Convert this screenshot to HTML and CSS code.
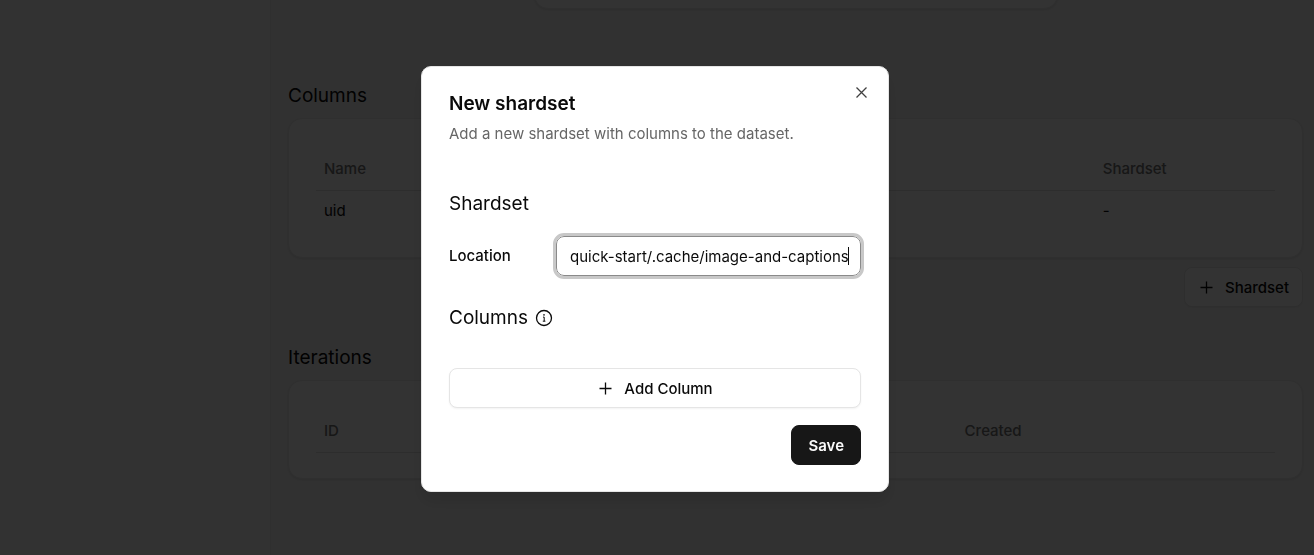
FILE: index.html
```html
<!DOCTYPE html>
<html lang="en">
<head>
<meta charset="utf-8">
<title>New shardset</title>
<link rel="stylesheet" href="styles.css">
</head>
<body>
<div class="app">
  <aside class="sidebar"></aside>
  <main class="main">
    <div class="summary card"></div>
    <section class="section">
      <h2 class="heading">Columns</h2>
      <div class="card">
        <table class="table">
          <colgroup><col class="col-wide"><col></colgroup>
          <thead><tr><th>Name</th><th>Shardset</th></tr></thead>
          <tbody><tr><td>uid</td><td>-</td></tr></tbody>
        </table>
      </div>
      <button class="button button-outline button-end" type="button">
        <svg class="icon" viewBox="0 0 17 17" aria-hidden="true"><path d="M8.5 2.5v12M2.5 8.5h12"/></svg>
        Shardset
      </button>
    </section>
    <section class="section">
      <h2 class="heading">Iterations</h2>
      <div class="card">
        <table class="table">
          <colgroup><col class="col-mid"><col></colgroup>
          <thead><tr><th>ID</th><th>Created</th></tr></thead>
        </table>
      </div>
    </section>
  </main>
</div>
<div class="overlay">
  <div class="dialog" role="dialog" aria-modal="true" aria-labelledby="dialog-title">
    <button class="close" type="button" aria-label="Close">
      <svg class="icon" viewBox="0 0 17 17" aria-hidden="true"><path d="M3.5 3.5l10 10M13.5 3.5l-10 10"/></svg>
    </button>
    <header class="dialog-header">
      <h1 class="title" id="dialog-title">New shardset</h1>
      <p class="description">Add a new shardset with columns to the dataset.</p>
    </header>
    <form class="form">
      <h2 class="heading">Shardset</h2>
      <div class="field">
        <label class="label" for="location">Location</label>
        <div class="input-wrap">
          <input class="input" id="location" type="text" value="quick-start/.cache/image-and-captions">
          <span class="caret"></span>
        </div>
      </div>
      <h2 class="heading heading-icon">Columns
        <svg class="icon icon-info" viewBox="0 0 18 18" aria-hidden="true"><circle cx="9" cy="9" r="7.5"/><path class="stem" d="M8 8.1h1.2v4M7.8 12.2h2.6"/><circle class="dot" cx="9" cy="5.9" r="0.8"/></svg>
      </h2>
      <button class="button button-outline button-add" type="button">
        <svg class="icon" viewBox="0 0 17 17" aria-hidden="true"><path d="M8.5 2.5v12M2.5 8.5h12"/></svg>
        Add Column
      </button>
      <button class="button button-primary" type="button">Save</button>
    </form>
  </div>
</div>
</body>
</html>
```
FILE: styles.css
```css
* { box-sizing: border-box; }

body {
  margin: 0;
  font-family: Inter, "Liberation Sans", sans-serif;
  font-size: 15px;
  line-height: 24px;
  color: #0a0a0a;
}

h1, h2, p { margin: 0; }

.app {
  display: flex;
  min-height: 100vh;
  background: #f5f5f5;
}

.sidebar {
  flex: 0 0 271px;
  border-right: 1px solid #e8e8e8;
  background: #f8f8f8;
}

.main {
  flex: 1;
  display: flex;
  flex-direction: column;
  padding: 0 11px 0 17px;
  overflow: hidden;
}

.card {
  padding: 30px 27px 25px;
  border: 1px solid #ebebeb;
  border-radius: 14px;
  background: #fcfcfc;
  box-shadow: 0 1px 3px rgba(0, 0, 0, 0.1);
}

.summary {
  align-self: center;
  width: 524px;
  margin: -48px 0 73px;
}

.section {
  display: flex;
  flex-direction: column;
  margin-bottom: 37px;
}

.heading {
  font-size: 19px;
  font-weight: 400;
  line-height: 28px;
}

.section .heading { margin-bottom: 8px; }

.table {
  width: 100%;
  table-layout: fixed;
  border-collapse: collapse;
}

.table th, .table td {
  height: 42px;
  padding: 0 8px;
  text-align: left;
}

.table th {
  height: 41px;
  border-bottom: 1px solid #e0e0e0;
  font-weight: 500;
  color: #737373;
}

.col-wide { width: 81.2%; }
.col-mid { width: 66.8%; }

.button {
  display: flex;
  align-items: center;
  justify-content: center;
  gap: 10px;
  height: 40px;
  padding: 1px 13px 0;
  border: 1px solid #e5e5e5;
  border-radius: 8px;
  font-family: inherit;
  font-size: 15px;
  font-weight: 500;
  color: #0a0a0a;
}

.button-outline {
  background: #fff;
  box-shadow: 0 1px 2px rgba(0, 0, 0, 0.05);
}

.button-end {
  align-self: flex-end;
  margin-top: 9px;
}

.button-add { margin-top: 36px; }

.button-primary {
  align-self: flex-end;
  margin-top: 17px;
  padding: 1px 16px 0;
  border-color: #171717;
  background: #171717;
  font-weight: 600;
  color: #fafafa;
}

.icon {
  flex: none;
  width: 17px;
  height: 17px;
  fill: none;
  stroke: currentColor;
  stroke-width: 1.3;
}

.icon-info {
  width: 18px;
  height: 18px;
}

.icon-info .stem { stroke-width: 1; }

.icon-info .dot {
  fill: currentColor;
  stroke: none;
}

.overlay {
  position: fixed;
  inset: 0;
  display: grid;
  place-items: center;
  padding: 2px 4px 0 0;
  background: rgba(0, 0, 0, 0.8);
}

.dialog {
  position: relative;
  width: 100%;
  max-width: 468px;
  padding: 27px 27px 26px;
  border: 1px solid #e5e5e5;
  border-radius: 10px;
  background: #fff;
  box-shadow: 0 10px 15px rgba(0, 0, 0, 0.1);
}

.close {
  position: absolute;
  top: 17px;
  right: 18px;
  display: flex;
  padding: 0;
  border: 0;
  background: none;
  color: #404040;
}

.dialog-header {
  display: grid;
  gap: 8px;
  margin-bottom: 44px;
}

.title {
  font-size: 19px;
  font-weight: 600;
  line-height: 20px;
}

.description { color: #666; }

.form {
  display: flex;
  flex-direction: column;
}

.field {
  display: flex;
  align-items: center;
  margin: 18px 0 28px;
}

.label {
  flex: 0 0 107px;
  font-weight: 500;
}

.input-wrap {
  position: relative;
  flex: 1;
}

.input {
  display: block;
  width: 100%;
  height: 40px;
  padding: 1px 12px 0 13px;
  border: 1px solid #8a8a8a;
  border-radius: 8px;
  outline: 3px solid #c8c8c8;
  background: #fff;
  font-family: inherit;
  font-size: 15px;
  color: #0a0a0a;
}

.caret {
  position: absolute;
  top: 11px;
  right: 12px;
  width: 1px;
  height: 18px;
  background: #0a0a0a;
}

.heading-icon {
  display: flex;
  align-items: center;
  gap: 7px;
}
```
